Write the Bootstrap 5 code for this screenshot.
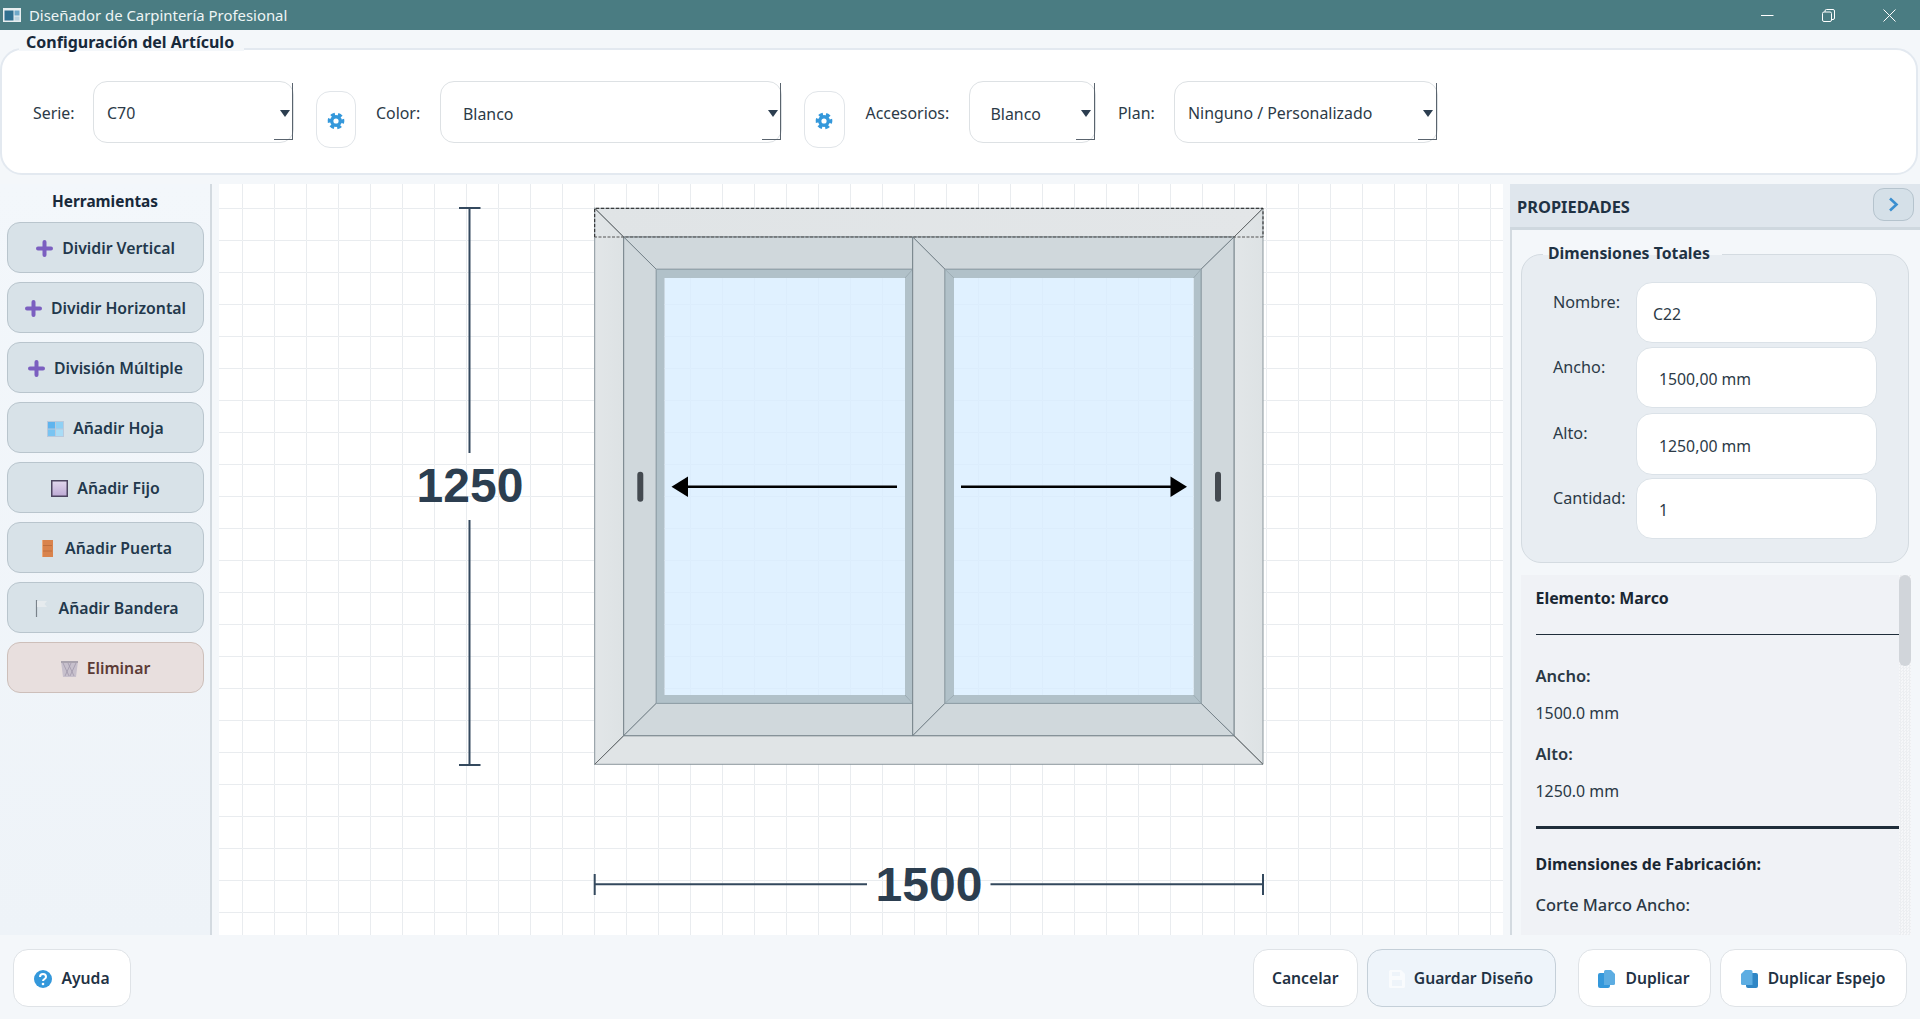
<!DOCTYPE html>
<html lang="es">
<head>
<meta charset="utf-8">
<title>Diseñador de Carpintería Profesional</title>
<link href="https://cdn.jsdelivr.net/npm/bootstrap@5.3.0/dist/css/bootstrap.min.css" rel="stylesheet">
<style>
html,body{height:100%;}
body{width:1920px;height:1019px;overflow:hidden;background:#f4f7fa;color:#1f2d3a;font-family:"Noto Sans","Open Sans",sans-serif;font-size:15.9px;line-height:22px;}
.tbar{height:30px;background:#4a7c82;color:#eef5f5;flex:none;font-size:14.9px;}
.tbar-ico{margin:0 8px 0 3px;}
.wbtn{width:61px;height:30px;}
.cfg-wrap{flex:none;padding:18px 2px 0 0;}
.cfg-box{height:127px;background:#fff;border:2px solid #e3e9f0;border-radius:22px;padding:31px 0 0 31px;position:relative;}
.cfg-title{position:absolute;left:17px;top:-20px;padding:0 10px 0 7px;background:#f4f7fa;font-weight:700;font-size:16px;color:#18293a;height:21px;line-height:24px;}
.lbl{height:62px;color:#2c3a47;padding-top:2px;}
.combo{height:62px;border:1.5px solid #dde1e4;border-radius:14px;background:#fff;position:relative;padding:0;color:#2c3a47;}
.combo::after{content:"";position:absolute;right:0;top:1px;bottom:2px;width:19px;border-right:1.5px solid #5a646e;border-bottom:0;}
.combo::before{content:"";position:absolute;right:0;bottom:2px;width:19px;height:1.5px;background:#5a646e;}
.combo-arrow{position:absolute;right:3.5px;top:28px;width:0;height:0;border-left:5.5px solid transparent;border-right:5.5px solid transparent;border-top:7px solid #2c3e50;}
.gearbtn{width:40.5px;height:57px;margin-top:10px;border:1.5px solid #e1e5e9;border-radius:14px;background:#fff;padding:0;}
.w-l1{width:60px}.w-c1{width:201px;padding-left:13px;padding-top:2px}.m-g1{margin-left:21.5px}
.m-l2{margin-left:20px;width:64px}.w-c2{width:342px;padding-left:22px;padding-top:3px}.m-g2{margin-left:22px}
.m-l3{margin-left:21px;width:103px}.w-c3{width:127px;padding-left:21px;padding-top:3px}
.m-l4{margin-left:22.5px;width:56px}.w-c4{width:263.5px;padding-left:13px;padding-top:2px}
.mainrow{flex:1 1 auto;min-height:0;margin-top:9px;}
.lpanel{width:212px;flex:none;background:linear-gradient(180deg,#f3f7fb,#eef3f8);border-right:2px solid #d3dae0;padding:0 7px;}
.lp-title{height:38px;display:flex;align-items:flex-start;justify-content:center;padding-top:7px;font-weight:700;color:#18293a;font-size:15.4px;}
.toolbtn{width:197px;height:51px;margin-bottom:9px;border:1.5px solid #b9c5cd;border-radius:13px;background:#d8e2e8;color:#22384c;font-weight:600;gap:9px;padding:2px 0 0;font-size:15.8px;}
.toolbtn.danger{background:#e8dfde;border-color:#cdbfba;color:#5b3b36;}
.ico-n{margin:0 3px;}
.ico-f{margin:0 2.5px;}
.cv{width:1284px;flex:none;margin-left:7px;background:#fff;display:block;}
.rpanel{width:410px;flex:none;margin-left:7px;border-left:2px solid #d3dae0;display:flex;flex-direction:column;min-height:0;}
.rp-head{height:46px;flex:none;background:#dfe6ed;border-bottom:3px solid #cfd8df;margin-left:-2px;padding:2px 6px 0 7px;font-weight:700;color:#1f3244;font-size:16.4px;}
.togglebtn{width:41px;height:33px;margin-top:-4px;border:1.5px solid #b5c3cd;border-radius:11px;background:#d5e0e8;padding:0;}
.dimgrp{width:388px;height:309px;margin:24px 0 0 9px;flex:none;background:#e8edf2;border:1.5px solid #d4dbe1;border-radius:20px;position:relative;padding:26.5px 0 0 0;}
.dim-title{position:absolute;left:21px;top:-12px;padding:0 12px 0 5px;background:#f4f7fa;font-weight:700;color:#1f3244;font-size:15.8px;height:12px;line-height:20px;}
.drow{height:61px;margin-bottom:4px;padding-left:31px;}
.drow.r2{margin-bottom:5px;}
.drow.r3{height:62px;margin-bottom:3px;}
.drow .dl{width:83px;margin-top:9px;color:#2c3a47;font-size:16.2px;}
.pinput{width:241px;height:100%;border:1.5px solid #dbe2e8;border-radius:16px;background:#fff;padding:20px 0 0 22px;color:#2c3a47;font-size:15.8px;line-height:22px;}
.pinput.c22{padding-left:16px;}
.drow.r3 .pinput{padding-top:21px;}
.infowrap{flex:1 1 auto;min-height:0;margin:12px 9px 0 9px;background:#f0f2f6;display:flex;overflow:hidden;}
.infotxt{flex:1 1 auto;min-width:0;overflow:hidden;padding:12px 0 0 14.5px;color:#2a3845;}
.infotxt p{margin:0;height:22px;}
.infotxt .b{font-weight:700;color:#1a2733;}
.infotxt .m{font-weight:600;font-size:16.5px;}
.infotxt .c{font-weight:500;font-size:16.4px;}
.infotxt hr{margin:0;opacity:1;border:0;background:#1f2d3a;}
.h1a{height:1px;margin-top:25px!important}
.h2a{height:2.5px;margin-top:24px!important}
.g30{margin-top:30px!important}.g15{margin-top:15px!important}.g19{margin-top:19px!important}.g25{margin-top:24px!important}
.sbar{width:12px;flex:none;background:repeating-conic-gradient(#eceef1 0 25%,#f6f7f9 0 50%) 0 0/3px 3px;}
.sthumb{height:91px;background:#d1d5da;border-radius:6px;}
.foot{height:84px;flex:none;padding:14px 0 0 13px;}
.fbtn{height:58px;border:1.5px solid #dfe3e7;border-radius:15px;background:#fff;color:#1f3244;font-weight:600;font-size:15.7px;gap:9px;padding:2px 0 0;}
.f-ay{width:118px}.f-ca{width:104.5px;margin-left:auto}.f-gu{width:189px;margin-left:9px;background:#eef4fa;border-color:#c4cfd8}
.f-du{width:133px;margin-left:22px}.f-es{width:187px;margin-left:9px;margin-right:13.5px}
.dimtxt{font-family:"Liberation Sans",Arial,sans-serif;font-weight:700;font-size:48px;fill:#2c3e50;text-anchor:middle;}
</style>
</head>
<body class="d-flex flex-column">

<div class="tbar d-flex align-items-center">
  <svg class="tbar-ico" width="18" height="14" viewBox="0 0 18 14"><rect width="18" height="14" fill="#e8eef0"/><rect x="1.500" y="2.500" width="9" height="10" fill="#2f6f8f"/><rect x="11.500" y="2.500" width="5" height="5" fill="#6fa8c8"/><rect x="11.500" y="8.500" width="5" height="4" fill="#bcd4e0"/></svg>
  <span>Diseñador de Carpintería Profesional</span>
  <div class="d-flex ms-auto">
    <div class="wbtn d-flex align-items-center justify-content-center"><svg width="13" height="13" viewBox="0 0 13 13"><path d="M0 6.500H12.500" stroke="#fff" stroke-width="1"/></svg></div>
    <div class="wbtn d-flex align-items-center justify-content-center"><svg width="13" height="13" viewBox="0 0 13 13" fill="none" stroke="#fff" stroke-width="1"><rect x=".5" y="3" width="9" height="9.500" rx="1.500"/><path d="M3 3V2A1.500 1.500 0 014.500 .5H11A1.500 1.500 0 0112.500 2V9A1.500 1.500 0 0111 10.500H9.500"/></svg></div>
    <div class="wbtn d-flex align-items-center justify-content-center"><svg width="13" height="13" viewBox="0 0 13 13"><path d="M.5 .5L12.500 12.500M12.500 .5L.5 12.500" stroke="#fff" stroke-width="1"/></svg></div>
  </div>
</div>

<div class="cfg-wrap">
  <div class="cfg-box d-flex align-items-start">
    <div class="cfg-title">Configuración del Artículo</div>
    <div class="lbl w-l1 d-flex align-items-center">Serie:</div>
    <div class="combo w-c1 d-flex align-items-center">C70<span class="combo-arrow"></span></div>
    <button class="gearbtn m-g1" type="button"><svg width="18" height="18" viewBox="0 0 18 18" fill="none" stroke="#3498db"><circle cx="9" cy="9" r="4.300" stroke-width="3.400"/><circle cx="9" cy="9" r="6.800" stroke-width="3.200" stroke-dasharray="4.100 3.020" transform="rotate(-15 9 9)"/></svg></button>
    <div class="lbl m-l2 d-flex align-items-center">Color:</div>
    <div class="combo w-c2 d-flex align-items-center">Blanco<span class="combo-arrow"></span></div>
    <button class="gearbtn m-g2" type="button"><svg width="18" height="18" viewBox="0 0 18 18" fill="none" stroke="#3498db"><circle cx="9" cy="9" r="4.300" stroke-width="3.400"/><circle cx="9" cy="9" r="6.800" stroke-width="3.200" stroke-dasharray="4.100 3.020" transform="rotate(-15 9 9)"/></svg></button>
    <div class="lbl m-l3 d-flex align-items-center">Accesorios:</div>
    <div class="combo w-c3 d-flex align-items-center">Blanco<span class="combo-arrow"></span></div>
    <div class="lbl m-l4 d-flex align-items-center">Plan:</div>
    <div class="combo w-c4 d-flex align-items-center">Ninguno / Personalizado<span class="combo-arrow"></span></div>
  </div>
</div>

<div class="mainrow d-flex">
  <aside class="lpanel">
    <div class="lp-title">Herramientas</div>
    <button class="toolbtn btn d-flex align-items-center justify-content-center" type="button">
      <svg width="17" height="17" viewBox="0 0 17 17"><path fill="#7b5fc0" d="M6.500 2a2 2 0 014 0v4.500H15a2 2 0 010 4h-4.500V15a2 2 0 01-4 0v-4.500H2a2 2 0 010-4h4.500z"/></svg><span>Dividir Vertical</span></button>
    <button class="toolbtn btn d-flex align-items-center justify-content-center" type="button">
      <svg width="17" height="17" viewBox="0 0 17 17"><path fill="#7b5fc0" d="M6.500 2a2 2 0 014 0v4.500H15a2 2 0 010 4h-4.500V15a2 2 0 01-4 0v-4.500H2a2 2 0 010-4h4.500z"/></svg><span>Dividir Horizontal</span></button>
    <button class="toolbtn btn d-flex align-items-center justify-content-center" type="button">
      <svg width="17" height="17" viewBox="0 0 17 17"><path fill="#7b5fc0" d="M6.500 2a2 2 0 014 0v4.500H15a2 2 0 010 4h-4.500V15a2 2 0 01-4 0v-4.500H2a2 2 0 010-4h4.500z"/></svg><span>División Múltiple</span></button>
    <button class="toolbtn btn d-flex align-items-center justify-content-center" type="button">
      <svg width="17" height="16" viewBox="0 0 17 16"><rect width="17" height="16" fill="#b9c9dc"/><rect x="1" y="1" width="7" height="6.500" fill="#5fb4ee"/><rect x="9" y="1" width="7" height="6.500" fill="#8fd0f4"/><rect x="1" y="8.500" width="7" height="6.500" fill="#79c4f2"/><rect x="9" y="8.500" width="7" height="6.500" fill="#a9dcf6"/></svg><span>Añadir Hoja</span></button>
    <button class="toolbtn btn d-flex align-items-center justify-content-center" type="button">
      <svg width="17" height="17" viewBox="0 0 17 17"><defs><linearGradient id="fj" x1="0" y1="0" x2="0" y2="1"><stop offset="0" stop-color="#e2d8ee"/><stop offset="1" stop-color="#bda9d4"/></linearGradient></defs><rect x=".75" y=".75" width="15.500" height="15.500" fill="url(#fj)" stroke="#4d4560" stroke-width="1.500"/></svg><span>Añadir Fijo</span></button>
    <button class="toolbtn btn d-flex align-items-center justify-content-center" type="button">
      <svg class="ico-n" width="11" height="17" viewBox="0 0 11 17"><rect width="11" height="17" fill="#d9834c"/><path d="M1 5.500H10M1 11H10" stroke="#b9693a" stroke-width=".8"/><rect width="1" height="17" fill="#e9a779"/></svg><span>Añadir Puerta</span></button>
    <button class="toolbtn btn d-flex align-items-center justify-content-center" type="button">
      <svg class="ico-f" width="12" height="17" viewBox="0 0 12 17"><path d="M1.500 0V17" stroke="#79828a" stroke-width="1.200"/><path d="M2 1H12L9.500 4 12 7H2z" fill="#e6ebee"/></svg><span>Añadir Bandera</span></button>
    <button class="toolbtn danger btn d-flex align-items-center justify-content-center" type="button">
      <svg width="17" height="17" viewBox="0 0 17 17"><path d="M0 1H17L15 17H2z" fill="#c7c0cc"/><path d="M2 3L8 16M7 3L13 16M15 3L9 16M10 3L4 16" stroke="#9c93a8" stroke-width=".7"/><path d="M0 1H17V3H0z" fill="#a9a3ae"/></svg><span>Eliminar</span></button>
  </aside>

  <svg class="cv" width="1284" height="751" viewBox="219 184 1284 751">
    <defs>
      <pattern id="grid" patternUnits="userSpaceOnUse" width="32" height="32" x="594" y="208"><path d="M32 .5H.5V32" fill="none" stroke="#e9ecef" stroke-width="1"/></pattern>
      <linearGradient id="ft" x1="0" y1="0" x2="1" y2="0"><stop offset="0" stop-color="#e0e4e6"/><stop offset="1" stop-color="#e3e6e8"/></linearGradient>
      <linearGradient id="fs" x1="0" y1="0" x2="1" y2="0"><stop offset="0" stop-color="#e2e6e8"/><stop offset="1" stop-color="#dde2e4"/></linearGradient>
    </defs>
    <rect x="219" y="184" width="1284" height="751" fill="url(#grid)"/>
    <!-- marco -->
    <g stroke="#8b979d" stroke-width="1">
      <polygon points="594.700,208.300 1263,208.300 1234,237 623.700,237" fill="url(#ft)"/>
      <polygon points="594.700,208.300 623.700,237 623.700,735.700 594.700,764.300" fill="url(#fs)"/>
      <polygon points="1263,208.300 1263,764.300 1234,735.700 1234,237" fill="url(#fs)"/>
      <polygon points="594.700,764.300 623.700,735.700 1234,735.700 1263,764.300" fill="#e0e4e6"/>
    </g>
    <path d="M594.700 208.300L623.700 237M1263 208.300L1234 237M594.700 764.300L623.700 735.700M1263 764.300L1234 735.700" stroke="#555" stroke-width=".7"/>
    <!-- hoja izquierda -->
    <g stroke="#6f7d84" stroke-width=".9" fill="#d0d8dc">
      <polygon points="623.700,237 912.700,237 912.700,269.300 656.300,269.300"/>
      <polygon points="623.700,237 656.300,269.300 656.300,703.300 623.700,735.700"/>
      <polygon points="623.700,735.700 656.300,703.300 912.700,703.300 912.700,735.700"/>
    </g>
    <rect x="656.300" y="269.300" width="256.400" height="434" fill="#b1c1c9" stroke="#8f9fa7" stroke-width=".9"/>
    <rect x="664.700" y="278" width="240.300" height="417" fill="#fff"/>
    <rect x="664.700" y="278" width="240.300" height="417" fill="url(#grid)"/>
    <rect x="664.700" y="278" width="240.300" height="417" fill="#d8eeff" fill-opacity=".8"/>
    <path d="M912.700 269.300L905 278M912.700 703.300L905 695" stroke="#93a3ab" stroke-width=".7"/>
    <!-- hoja derecha -->
    <g stroke="#6f7d84" stroke-width=".9" fill="#d0d8dc">
      <polygon points="912.700,237 1234,237 1201,269.300 945,269.300"/>
      <polygon points="912.700,237 945,269.300 945,703.300 912.700,735.700"/>
      <polygon points="1234,237 1234,735.700 1201,703.300 1201,269.300"/>
      <polygon points="912.700,735.700 945,703.300 1201,703.300 1234,735.700"/>
    </g>
    <rect x="945" y="269.300" width="256" height="434" fill="#b1c1c9" stroke="#8f9fa7" stroke-width=".9"/>
    <rect x="954" y="278" width="239.500" height="417" fill="#fff"/>
    <rect x="954" y="278" width="239.500" height="417" fill="url(#grid)"/>
    <rect x="954" y="278" width="239.500" height="417" fill="#d8eeff" fill-opacity=".8"/>
    <path d="M945 269.300L954 278M1201 269.300L1193.500 278M945 703.300L954 695M1201 703.300L1193.500 695" stroke="#93a3ab" stroke-width=".7"/>
    <!-- selección -->
    <path d="M594.700 237V208.300H1263V237" fill="none" stroke="#222" stroke-width="1" stroke-dasharray="3 2"/>
    <path d="M1263 237H594.700" fill="none" stroke="#555" stroke-width="1" stroke-dasharray="3 1.500"/>
    <!-- tiradores -->
    <rect x="637.300" y="471.700" width="6" height="30" rx="3" fill="#444a50"/>
    <rect x="1215" y="471.700" width="6" height="30" rx="3" fill="#444a50"/>
    <!-- flechas -->
    <path d="M897 486.700H686" stroke="#000" stroke-width="2.500"/>
    <path d="M671.500 486.700L688 476.500V497z" fill="#000"/>
    <path d="M961 486.700H1172" stroke="#000" stroke-width="2.500"/>
    <path d="M1187 486.700L1170.500 476.500V497z" fill="#000"/>
    <!-- cotas -->
    <g stroke="#34495e" stroke-width="2" fill="none">
      <path d="M469.500 208V453M469.500 520V765M459 208H480.500M459 765H480.500"/>
      <path d="M594.700 884.300H867M990.500 884.300H1263M594.700 874V895M1263 874V895"/>
    </g>
    <text class="dimtxt" x="470" y="502">1250</text>
    <text class="dimtxt" x="929" y="901">1500</text>
  </svg>

  <aside class="rpanel">
    <div class="rp-head d-flex align-items-center justify-content-between">
      <span>PROPIEDADES</span>
      <button class="togglebtn d-flex align-items-center justify-content-center" type="button"><svg width="11" height="15" viewBox="0 0 11 15"><path d="M2 1.500L8.500 7.500L2 13.500" fill="none" stroke="#3b8fd0" stroke-width="2.600"/></svg></button>
    </div>
    <div class="dimgrp">
      <div class="dim-title">Dimensiones Totales</div>
      <div class="drow d-flex"><div class="dl">Nombre:</div><div class="pinput c22">C22</div></div>
      <div class="drow r2 d-flex"><div class="dl">Ancho:</div><div class="pinput">1500,00 mm</div></div>
      <div class="drow r3 d-flex"><div class="dl">Alto:</div><div class="pinput">1250,00 mm</div></div>
      <div class="drow d-flex"><div class="dl">Cantidad:</div><div class="pinput">1</div></div>
    </div>
    <div class="infowrap">
      <div class="infotxt">
        <p class="b">Elemento: Marco</p>
        <hr class="h1a">
        <p class="m g30">Ancho:</p>
        <p class="g15">1500.0 mm</p>
        <p class="m g19">Alto:</p>
        <p class="g15">1250.0 mm</p>
        <hr class="h2a">
        <p class="b g25">Dimensiones de Fabricación:</p>
        <p class="c g19">Corte Marco Ancho:</p>
      </div>
      <div class="sbar"><div class="sthumb"></div></div>
    </div>
  </aside>
</div>

<div class="foot d-flex">
  <button class="fbtn f-ay btn d-flex align-items-center justify-content-center" type="button">
    <svg width="18" height="18" viewBox="0 0 18 18"><circle cx="9" cy="9" r="9" fill="#3498db"/><path d="M6 7A3 3 0 0112 7C12 9 9 9 9 11" fill="none" stroke="#fff" stroke-width="2"/><circle cx="9" cy="14" r="1.300" fill="#fff"/></svg><span>Ayuda</span></button>
  <button class="fbtn f-ca btn d-flex align-items-center justify-content-center" type="button"><span>Cancelar</span></button>
  <button class="fbtn f-gu btn d-flex align-items-center justify-content-center" type="button">
    <svg width="16" height="18" viewBox="0 0 16 18"><path d="M0 1.500A1.500 1.500 0 011.500 0H12L16 4V16.500A1.500 1.500 0 0114.500 18H1.500A1.500 1.500 0 010 16.500z" fill="#f9fbfd"/><rect x="3" y="2" width="8" height="4" fill="#eef4fa"/><rect x="3" y="10" width="10" height="6" fill="#eef4fa"/></svg><span>Guardar Diseño</span></button>
  <button class="fbtn f-du btn d-flex align-items-center justify-content-center" type="button">
    <svg width="18" height="18" viewBox="0 0 18 18"><rect x="0" y="3" width="12" height="15" rx="2" fill="#3498db"/><path d="M6 1.500A1.500 1.500 0 017.500 0H13L17 4V13.500A1.500 1.500 0 0115.500 15H6z" fill="#5dade2"/></svg><span>Duplicar</span></button>
  <button class="fbtn f-es btn d-flex align-items-center justify-content-center" type="button">
    <svg width="18" height="18" viewBox="0 0 18 18"><rect x="5" y="3" width="12" height="15" rx="2" fill="#2f86c5"/><path d="M0 4L4 0H10A1.500 1.500 0 0111.500 1.500V15H1.500A1.500 1.500 0 010 13.500z" fill="#5dade2"/></svg><span>Duplicar Espejo</span></button>
</div>

<script src="https://cdn.jsdelivr.net/npm/bootstrap@5.3.0/dist/js/bootstrap.bundle.min.js"></script>
</body>
</html>
